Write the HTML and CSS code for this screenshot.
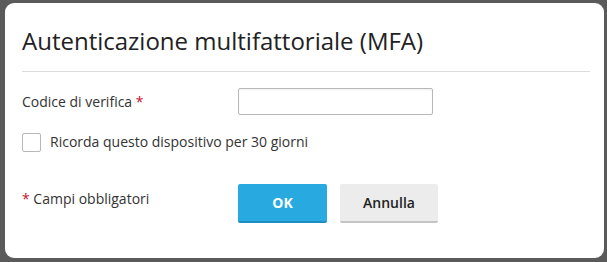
FILE: index.html
```html
<!DOCTYPE html>
<html lang="it">
<head>
<meta charset="utf-8">
<link rel="stylesheet" href="styles.css">
</head>
<body>
<div class="dialog">
  <h1 class="title">Autenticazione multifattoriale (MFA)</h1>
  <div class="sep"></div>
  <div class="row field">
    <label class="label">Codice di verifica <span class="req">*</span></label>
    <input class="input" type="text">
  </div>
  <div class="row check">
    <span class="box"></span>
    <span class="check-label">Ricorda questo dispositivo per 30 giorni</span>
  </div>
  <div class="row footer">
    <div class="note"><span class="req">*</span> Campi obbligatori</div>
    <div class="buttons">
      <button class="btn ok">OK</button>
      <button class="btn cancel">Annulla</button>
    </div>
  </div>
</div>
</body>
</html>
```
FILE: styles.css
```css
html, body { margin: 0; padding: 0; }
body {
  background: #5a5a5a;
  width: 607px;
  height: 262px;
  padding: 3px 3px 0 5px;
  box-sizing: border-box;
  font-family: "Open Sans", "Liberation Sans", sans-serif;
  color: #333;
}
.dialog {
  background: #fff;
  border-radius: 9px;
  height: 255px;
  padding: 0 14px 0 17px;
  box-sizing: border-box;
}
.title {
  margin: 0;
  padding-top: 21px;
  font-size: 24px;
  font-weight: 400;
  line-height: 33px;
  color: #222;
}
.sep {
  margin: 14px 0 0 0;
  height: 1px;
  background: #dcdcdc;
}
.row { display: flex; align-items: center; }
.field { margin-top: 16px; }
.label { width: 216px; font-size: 14px; line-height: 20px; }
.req { color: #c4122f; }
.input {
  width: 195px;
  height: 27px;
  box-sizing: border-box;
  border: 1px solid #b8b8b8;
  border-radius: 2px;
  margin: 0;
  padding: 0 6px;
  box-shadow: inset 0 1px 2px rgba(0,0,0,0.06);
}
.check { margin-top: 17px; }
.box {
  width: 19px;
  height: 19px;
  box-sizing: border-box;
  border: 1px solid #b8b8b8;
  border-radius: 2px;
  background: #fff;
}
.check-label { margin-left: 9px; font-size: 14px; line-height: 20px; }
.footer { margin-top: 32px; align-items: flex-start; }
.note { width: 216px; font-size: 14px; line-height: 20px; margin-top: 5px; }
.buttons { display: flex; gap: 13px; }
.btn {
  height: 39px;
  border: 0;
  border-radius: 2px;
  margin: 0;
  font-family: "Open Sans", "Liberation Sans", sans-serif;
  font-size: 14px;
  font-weight: 700;
  padding: 0;
}
.ok {
  width: 89px;
  background: #28a9df;
  color: #fff;
  border-bottom: 2px solid #1f8dc0;
}
.cancel {
  width: 98px;
  background: #ececec;
  color: #222;
  font-weight: 600;
  border-bottom: 2px solid #c4c4c4;
}
```
